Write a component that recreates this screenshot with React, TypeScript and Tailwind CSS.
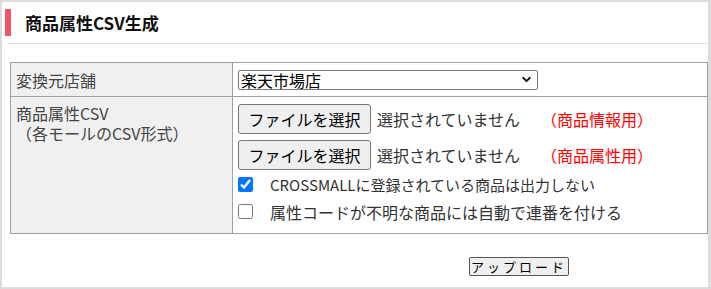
import { ChevronDown } from "lucide-react";

const jp = { fontFamily: '"Noto Sans CJK JP", "Noto Sans", sans-serif' };

function FileRow({ note }: { note: string }) {
  return (
    <div className="flex items-center h-[30px]">
      <button className="h-[30px] w-[133px] rounded-[3px] border border-[#767676] bg-[#efefef] text-[16px] text-black leading-none">
        ファイルを選択
      </button>
      <span className="ml-[6px] text-[16px] text-[#333]">選択されていません</span>
      <span className="ml-[21px] text-[16px] text-[#ff0000]">{note}</span>
    </div>
  );
}

function CheckRow({ label, checked, size }: { label: string; checked?: boolean; size: string }) {
  return (
    <label className="flex items-center h-[15px]">
      <input type="checkbox" defaultChecked={checked} className="m-0 w-[15px] h-[15px]" />
      <span className={`ml-[17px] text-[#333] leading-none ${size}`}>{label}</span>
    </label>
  );
}

export default function App() {
  return (
    <div
      className="w-[711px] h-[289px] border-2 border-r-[3px] border-[#dcdcdc] bg-white overflow-hidden"
      style={jp}
    >
      <div className="flex items-center pt-[7px] pl-[3px]">
        <div className="w-[6px] h-[27px] bg-[#f0566a]" />
        <h1 className="ml-[14px] text-[17px] font-bold text-[#111]">商品属性CSV生成</h1>
      </div>
      <div className="mt-[7px] ml-[5px] border-t border-[#e2e2e2]" />

      <table className="mt-[18px] ml-[8px] w-[698px] border-collapse">
        <tbody>
          <tr className="h-[34px]">
            <td className="w-[222px] border border-[#a0a0a0] bg-[#f0f0f0] pl-[5px] text-[16px] text-[#444] align-middle">
              変換元店舗
            </td>
            <td className="border border-[#a0a0a0] pl-[5px] align-middle">
              <div className="flex items-center justify-between h-[20px] w-[300px] rounded-[2px] border border-[#767676] pl-[2px] pr-[4px] text-[16px] text-black">
                <span>楽天市場店</span>
                <ChevronDown className="w-[13px] h-[13px]" strokeWidth={3.5} />
              </div>
            </td>
          </tr>
          <tr className="h-[137px]">
            <td className="border border-[#a0a0a0] bg-[#f0f0f0] pl-[5px] pt-[6px] align-top text-[16px] leading-[20px] text-[#444]">
              <div>商品属性CSV</div>
              <div>（各モールのCSV形式）</div>
            </td>
            <td className="border border-[#a0a0a0] pl-[5px] pt-[7px] align-top">
              <div className="flex flex-col gap-[6px]">
                <FileRow note="（商品情報用）" />
                <FileRow note="（商品属性用）" />
              </div>
              <div className="flex flex-col gap-[12px] mt-[7px]">
                <CheckRow label="CROSSMALLに登録されている商品は出力しない" checked size="text-[15px]" />
                <CheckRow label="属性コードが不明な商品には自動で連番を付ける" size="text-[16px]" />
              </div>
            </td>
          </tr>
        </tbody>
      </table>

      <div className="flex mt-[23px] pl-[467px]">
        <button className="h-[19px] w-[100px] rounded-[2px] border border-[#555] bg-[#efefef] text-[13px] leading-none tracking-[3px] text-black">
          アップロード
        </button>
      </div>
    </div>
  );
}
